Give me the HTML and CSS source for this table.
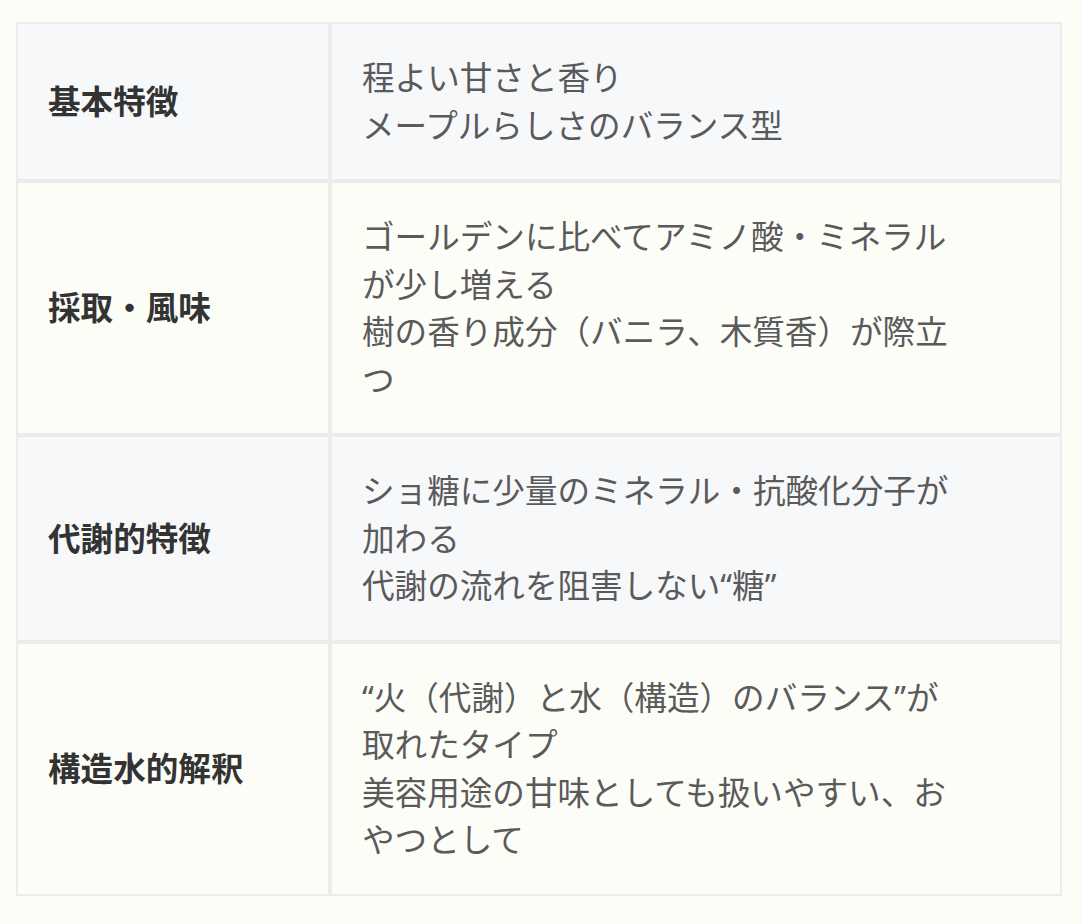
FILE: index.html
```html
<!DOCTYPE html>
<html lang="ja">
<head>
<meta charset="utf-8">
<link rel="stylesheet" href="styles.css">
</head>
<body>
<table class="spec">
  <colgroup><col class="c1"><col class="c2"></colgroup>
  <tbody>
    <tr class="gray">
      <th>基本特徴</th>
      <td><div class="txt">程よい甘さと香り<br>メープルらしさのバランス型</div></td>
    </tr>
    <tr>
      <th>採取・風味</th>
      <td><div class="txt">ゴールデンに比べてアミノ酸・ミネラルが少し増える<br>樹の香り成分（バニラ、木質香）が際立つ</div></td>
    </tr>
    <tr class="gray">
      <th>代謝的特徴</th>
      <td><div class="txt">ショ糖に少量のミネラル・抗酸化分子が加わる<br>代謝の流れを阻害しない“糖”</div></td>
    </tr>
    <tr>
      <th>構造水的解釈</th>
      <td><div class="txt">“火（代謝）と水（構造）のバランス”が取れたタイプ<br>美容用途の甘味としても扱いやすい、おやつとして</div></td>
    </tr>
  </tbody>
</table>
</body>
</html>
```
FILE: styles.css
```css
html, body {
  margin: 0;
  background: #fdfdf8;
}
body {
  padding: 22px 20px 0 16px;
  font-family: "Noto Sans", "Noto Sans CJK JP", sans-serif;
}
.spec {
  width: 1046px;
  table-layout: fixed;
  border-collapse: separate;
  border-spacing: 0;
}
.c1 { width: 314px; }
.c2 { width: 732px; }
.spec th, .spec td {
  border: 2px solid #ececec;
  padding: 30px 30px 30px 30px;
  vertical-align: middle;
  text-align: left;
  font-size: 32.6px;
  line-height: 47.5px;
}
.spec th {
  font-weight: 700;
  color: #333333;
}
.spec td {
  color: #5a5a5a;
  font-weight: 400;
}
.txt {
  width: 602px;
}
.gray th, .gray td {
  background: #f7f8fa;
}
```
